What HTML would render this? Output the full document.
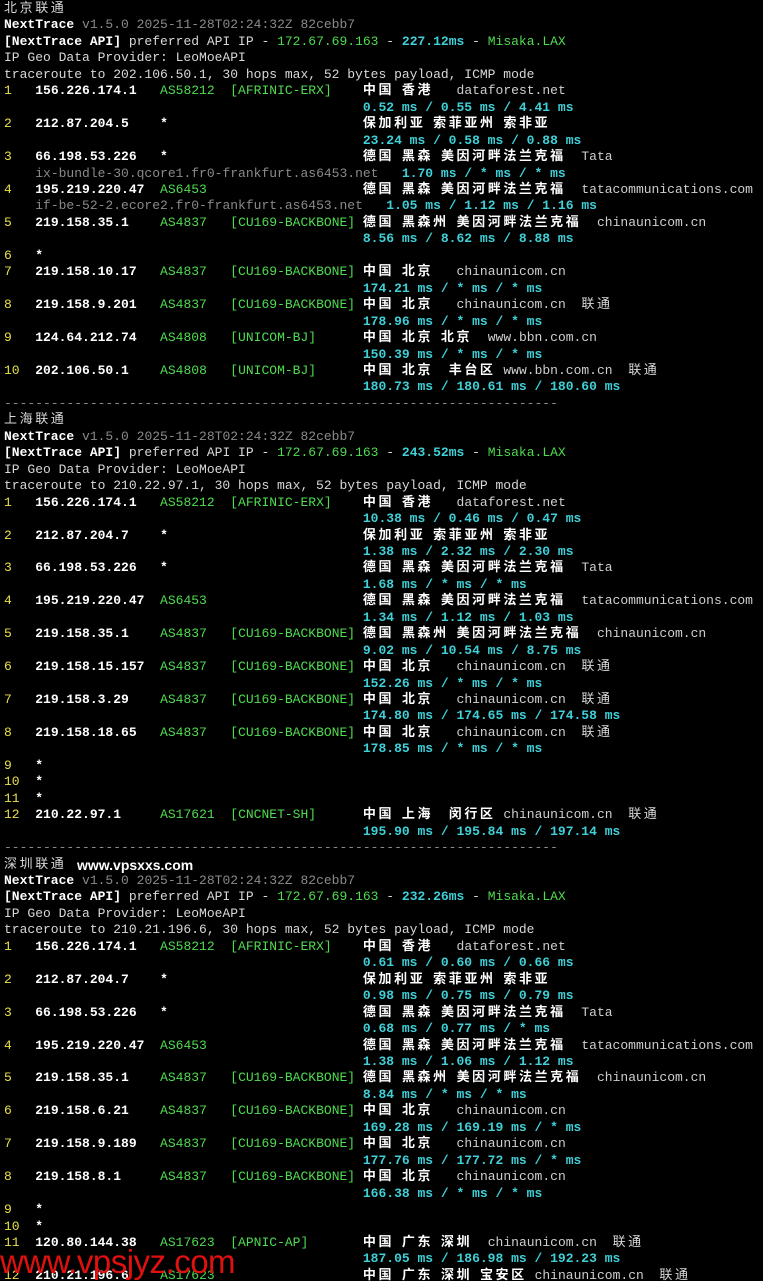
<!DOCTYPE html>
<html><head><meta charset="utf-8"><style>
html,body{margin:0;padding:0;background:#000;width:763px;height:1280px;overflow:hidden}
pre{margin:0;padding:1px 0 0 4px;font-family:"Liberation Mono","Noto Sans CJK SC",monospace;font-size:13px;line-height:16.45px;color:#d8d8d8;white-space:pre}
b{color:#fff;font-weight:bold}
.g{color:#8a8a8a}
.G{color:#4fdc4f}
.y{color:#e8e04a}
.c{color:#3fd0d8;font-weight:bold}
.d{color:#cfcfcf}
i{font-style:normal;font-family:"Noto Sans CJK SC",sans-serif;letter-spacing:2.6px;line-height:0}
b i{font-weight:bold}
.wm{position:absolute;left:0;top:1243px;font-family:"Liberation Sans",sans-serif;font-size:33px;color:#e01010;letter-spacing:-0.5px}
.w2{position:absolute;left:77px;top:857px;font-family:"Liberation Sans",sans-serif;font-size:14px;color:#fff;font-weight:bold}
</style></head><body>
<pre><i>北京联通</i>
<b>NextTrace</b> <span class="g">v1.5.0 2025-11-28T02:24:32Z 82cebb7</span>
<b>[NextTrace API]</b> preferred API IP - <span class="G">172.67.69.163</span> - <span class="c">227.12ms</span> - <span class="G">Misaka.LAX</span>
IP Geo Data Provider: LeoMoeAPI
traceroute to 202.106.50.1, 30 hops max, 52 bytes payload, ICMP mode
<span class="y">1</span>   <b>156.226.174.1</b>   <span class="G">AS58212  [AFRINIC-ERX]</span>    <b><i>中国</i> <i>香港</i></b>   <span class="d">dataforest.net</span>
                                              <span class="c">0.52 ms / 0.55 ms / 4.41 ms</span>
<span class="y">2</span>   <b>212.87.204.5</b>    <b>*</b>                         <b><i>保加利亚</i> <i>索菲亚州</i> <i>索非亚</i></b>
                                              <span class="c">23.24 ms / 0.58 ms / 0.88 ms</span>
<span class="y">3</span>   <b>66.198.53.226</b>   <b>*</b>                         <b><i>德国</i> <i>黑森</i> <i>美因河畔法兰克福</i></b>  <span class="d">Tata</span>
    <span class="g">ix-bundle-30.qcore1.fr0-frankfurt.as6453.net</span>   <span class="c">1.70 ms / * ms / * ms</span>
<span class="y">4</span>   <b>195.219.220.47</b>  <span class="G">AS6453</span>                    <b><i>德国</i> <i>黑森</i> <i>美因河畔法兰克福</i></b>  <span class="d">tatacommunications.com</span>
    <span class="g">if-be-52-2.ecore2.fr0-frankfurt.as6453.net</span>   <span class="c">1.05 ms / 1.12 ms / 1.16 ms</span>
<span class="y">5</span>   <b>219.158.35.1</b>    <span class="G">AS4837   [CU169-BACKBONE]</span> <b><i>德国</i> <i>黑森州</i> <i>美因河畔法兰克福</i></b>  <span class="d">chinaunicom.cn</span>
                                              <span class="c">8.56 ms / 8.62 ms / 8.88 ms</span>
<span class="y">6</span>   <b>*</b>
<span class="y">7</span>   <b>219.158.10.17</b>   <span class="G">AS4837   [CU169-BACKBONE]</span> <b><i>中国</i> <i>北京</i></b>   <span class="d">chinaunicom.cn</span>
                                              <span class="c">174.21 ms / * ms / * ms</span>
<span class="y">8</span>   <b>219.158.9.201</b>   <span class="G">AS4837   [CU169-BACKBONE]</span> <b><i>中国</i> <i>北京</i></b>   <span class="d">chinaunicom.cn</span>  <i>联通</i>
                                              <span class="c">178.96 ms / * ms / * ms</span>
<span class="y">9</span>   <b>124.64.212.74</b>   <span class="G">AS4808   [UNICOM-BJ]</span>      <b><i>中国</i> <i>北京</i> <i>北京</i></b>  <span class="d">www.bbn.com.cn</span>
                                              <span class="c">150.39 ms / * ms / * ms</span>
<span class="y">10</span>  <b>202.106.50.1</b>    <span class="G">AS4808   [UNICOM-BJ]</span>      <b><i>中国</i> <i>北京</i>  <i>丰台区</i></b> <span class="d">www.bbn.com.cn</span>  <i>联通</i>
                                              <span class="c">180.73 ms / 180.61 ms / 180.60 ms</span>
<span class="g">-----------------------------------------------------------------------</span>
<i>上海联通</i>
<b>NextTrace</b> <span class="g">v1.5.0 2025-11-28T02:24:32Z 82cebb7</span>
<b>[NextTrace API]</b> preferred API IP - <span class="G">172.67.69.163</span> - <span class="c">243.52ms</span> - <span class="G">Misaka.LAX</span>
IP Geo Data Provider: LeoMoeAPI
traceroute to 210.22.97.1, 30 hops max, 52 bytes payload, ICMP mode
<span class="y">1</span>   <b>156.226.174.1</b>   <span class="G">AS58212  [AFRINIC-ERX]</span>    <b><i>中国</i> <i>香港</i></b>   <span class="d">dataforest.net</span>
                                              <span class="c">10.38 ms / 0.46 ms / 0.47 ms</span>
<span class="y">2</span>   <b>212.87.204.7</b>    <b>*</b>                         <b><i>保加利亚</i> <i>索菲亚州</i> <i>索非亚</i></b>
                                              <span class="c">1.38 ms / 2.32 ms / 2.30 ms</span>
<span class="y">3</span>   <b>66.198.53.226</b>   <b>*</b>                         <b><i>德国</i> <i>黑森</i> <i>美因河畔法兰克福</i></b>  <span class="d">Tata</span>
                                              <span class="c">1.68 ms / * ms / * ms</span>
<span class="y">4</span>   <b>195.219.220.47</b>  <span class="G">AS6453</span>                    <b><i>德国</i> <i>黑森</i> <i>美因河畔法兰克福</i></b>  <span class="d">tatacommunications.com</span>
                                              <span class="c">1.34 ms / 1.12 ms / 1.03 ms</span>
<span class="y">5</span>   <b>219.158.35.1</b>    <span class="G">AS4837   [CU169-BACKBONE]</span> <b><i>德国</i> <i>黑森州</i> <i>美因河畔法兰克福</i></b>  <span class="d">chinaunicom.cn</span>
                                              <span class="c">9.02 ms / 10.54 ms / 8.75 ms</span>
<span class="y">6</span>   <b>219.158.15.157</b>  <span class="G">AS4837   [CU169-BACKBONE]</span> <b><i>中国</i> <i>北京</i></b>   <span class="d">chinaunicom.cn</span>  <i>联通</i>
                                              <span class="c">152.26 ms / * ms / * ms</span>
<span class="y">7</span>   <b>219.158.3.29</b>    <span class="G">AS4837   [CU169-BACKBONE]</span> <b><i>中国</i> <i>北京</i></b>   <span class="d">chinaunicom.cn</span>  <i>联通</i>
                                              <span class="c">174.80 ms / 174.65 ms / 174.58 ms</span>
<span class="y">8</span>   <b>219.158.18.65</b>   <span class="G">AS4837   [CU169-BACKBONE]</span> <b><i>中国</i> <i>北京</i></b>   <span class="d">chinaunicom.cn</span>  <i>联通</i>
                                              <span class="c">178.85 ms / * ms / * ms</span>
<span class="y">9</span>   <b>*</b>
<span class="y">10</span>  <b>*</b>
<span class="y">11</span>  <b>*</b>
<span class="y">12</span>  <b>210.22.97.1</b>     <span class="G">AS17621  [CNCNET-SH]</span>      <b><i>中国</i> <i>上海</i>  <i>闵行区</i></b> <span class="d">chinaunicom.cn</span>  <i>联通</i>
                                              <span class="c">195.90 ms / 195.84 ms / 197.14 ms</span>
<span class="g">-----------------------------------------------------------------------</span>
<i>深圳联通</i>
<b>NextTrace</b> <span class="g">v1.5.0 2025-11-28T02:24:32Z 82cebb7</span>
<b>[NextTrace API]</b> preferred API IP - <span class="G">172.67.69.163</span> - <span class="c">232.26ms</span> - <span class="G">Misaka.LAX</span>
IP Geo Data Provider: LeoMoeAPI
traceroute to 210.21.196.6, 30 hops max, 52 bytes payload, ICMP mode
<span class="y">1</span>   <b>156.226.174.1</b>   <span class="G">AS58212  [AFRINIC-ERX]</span>    <b><i>中国</i> <i>香港</i></b>   <span class="d">dataforest.net</span>
                                              <span class="c">0.61 ms / 0.60 ms / 0.66 ms</span>
<span class="y">2</span>   <b>212.87.204.7</b>    <b>*</b>                         <b><i>保加利亚</i> <i>索菲亚州</i> <i>索非亚</i></b>
                                              <span class="c">0.98 ms / 0.75 ms / 0.79 ms</span>
<span class="y">3</span>   <b>66.198.53.226</b>   <b>*</b>                         <b><i>德国</i> <i>黑森</i> <i>美因河畔法兰克福</i></b>  <span class="d">Tata</span>
                                              <span class="c">0.68 ms / 0.77 ms / * ms</span>
<span class="y">4</span>   <b>195.219.220.47</b>  <span class="G">AS6453</span>                    <b><i>德国</i> <i>黑森</i> <i>美因河畔法兰克福</i></b>  <span class="d">tatacommunications.com</span>
                                              <span class="c">1.38 ms / 1.06 ms / 1.12 ms</span>
<span class="y">5</span>   <b>219.158.35.1</b>    <span class="G">AS4837   [CU169-BACKBONE]</span> <b><i>德国</i> <i>黑森州</i> <i>美因河畔法兰克福</i></b>  <span class="d">chinaunicom.cn</span>
                                              <span class="c">8.84 ms / * ms / * ms</span>
<span class="y">6</span>   <b>219.158.6.21</b>    <span class="G">AS4837   [CU169-BACKBONE]</span> <b><i>中国</i> <i>北京</i></b>   <span class="d">chinaunicom.cn</span>
                                              <span class="c">169.28 ms / 169.19 ms / * ms</span>
<span class="y">7</span>   <b>219.158.9.189</b>   <span class="G">AS4837   [CU169-BACKBONE]</span> <b><i>中国</i> <i>北京</i></b>   <span class="d">chinaunicom.cn</span>
                                              <span class="c">177.76 ms / 177.72 ms / * ms</span>
<span class="y">8</span>   <b>219.158.8.1</b>     <span class="G">AS4837   [CU169-BACKBONE]</span> <b><i>中国</i> <i>北京</i></b>   <span class="d">chinaunicom.cn</span>
                                              <span class="c">166.38 ms / * ms / * ms</span>
<span class="y">9</span>   <b>*</b>
<span class="y">10</span>  <b>*</b>
<span class="y">11</span>  <b>120.80.144.38</b>   <span class="G">AS17623  [APNIC-AP]</span>       <b><i>中国</i> <i>广东</i> <i>深圳</i></b>  <span class="d">chinaunicom.cn</span>  <i>联通</i>
                                              <span class="c">187.05 ms / 186.98 ms / 192.23 ms</span>
<span class="y">12</span>  <b>210.21.196.6</b>    <span class="G">AS17623</span>                   <b><i>中国</i> <i>广东</i> <i>深圳</i> <i>宝安区</i></b> <span class="d">chinaunicom.cn</span>  <i>联通</i>
</pre>
<div class="w2">www.vpsxxs.com</div>
<div class="wm">www.vpsjyz.com</div>
</body></html>
